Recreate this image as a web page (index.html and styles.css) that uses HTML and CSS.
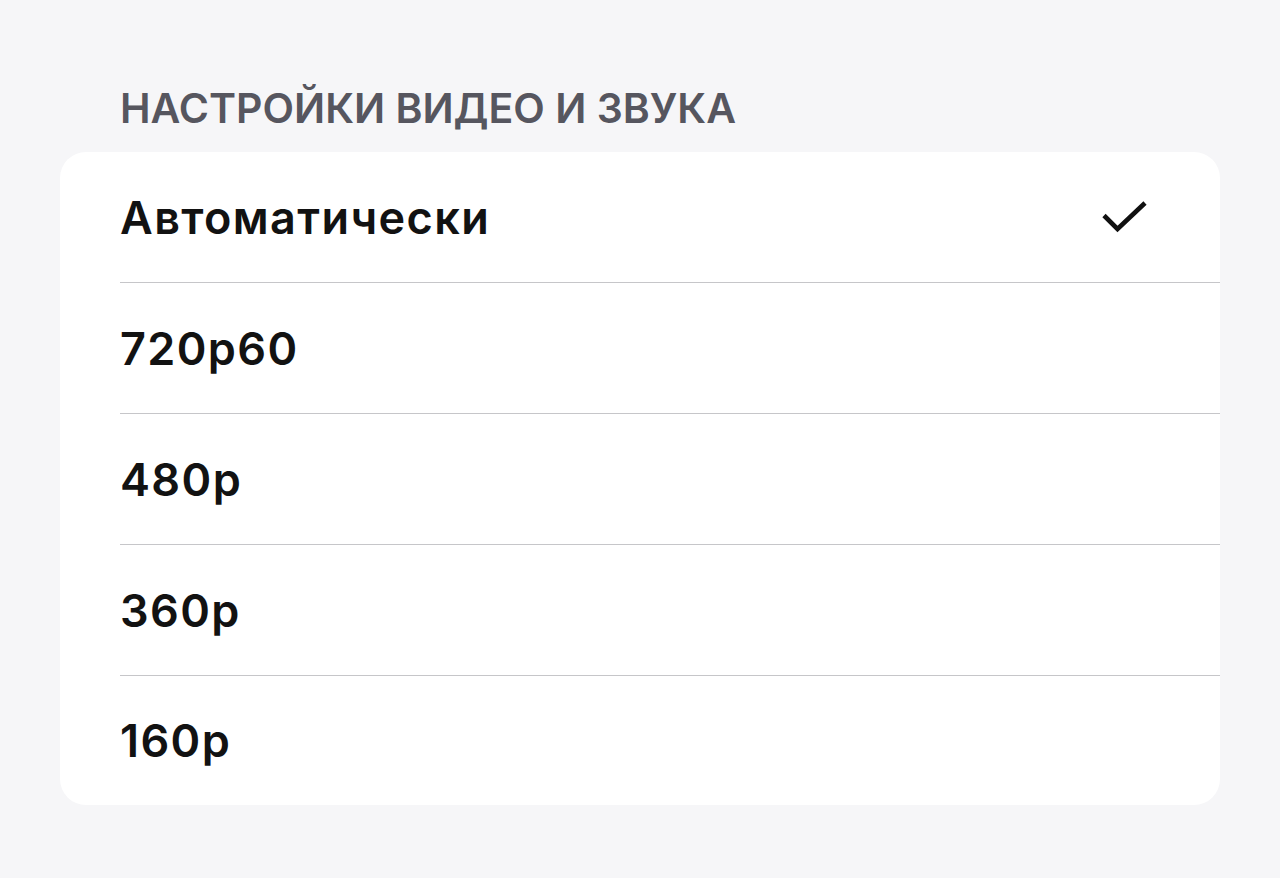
FILE: index.html
```html
<!DOCTYPE html>
<html lang="ru">
<head>
<meta charset="utf-8">
<link rel="stylesheet" href="styles.css">
</head>
<body>
<div class="page">
  <h2 class="section-title">НАСТРОЙКИ ВИДЕО И ЗВУКА</h2>
  <div class="card">
    <div class="row"><div class="row-inner"><span class="label">Автоматически</span>
      <svg class="check" width="48" height="34" viewBox="0 0 48 34"><path d="M3 15.5 L16.5 29 L44 3" fill="none" stroke="#111" stroke-width="4.6" stroke-linecap="butt" stroke-linejoin="miter"/></svg>
    </div></div>
    <div class="row"><div class="row-inner"><span class="label">720p60</span></div></div>
    <div class="row"><div class="row-inner"><span class="label">480p</span></div></div>
    <div class="row"><div class="row-inner"><span class="label">360p</span></div></div>
    <div class="row last"><div class="row-inner"><span class="label">160p</span></div></div>
  </div>
</div>
</body>
</html>
```
FILE: styles.css
```css
html, body {
  margin: 0;
  padding: 0;
  background: #f6f6f8;
}
body {
  font-family: Inter, "Noto Sans", "Liberation Sans", sans-serif;
}
.page {
  padding: 83px 60px 0 60px;
  width: 1160px;
}
.section-title {
  margin: 0 0 19px 60px;
  font-size: 41px;
  line-height: 50px;
  font-weight: 600;
  color: #56565f;
  letter-spacing: 0;
}
.card {
  background: #ffffff;
  border-radius: 26px;
  overflow: hidden;
}
.row {
  padding-left: 60px;
}
.row-inner {
  height: 130px;
  border-bottom: 1px solid #c6c6c9;
  display: flex;
  align-items: center;
  justify-content: space-between;
  padding-right: 71px;
}
.row.last .row-inner {
  border-bottom: none;
  height: 129px;
}
.label {
  font-size: 45px;
  font-weight: 600;
  color: #121212;
  letter-spacing: 1.4px;
}
.check {
  display: block;
}
```
